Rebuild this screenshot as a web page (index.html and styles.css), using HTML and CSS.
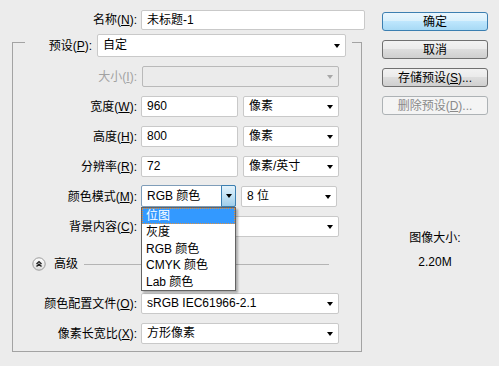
FILE: index.html
```html
<!DOCTYPE html>
<html lang="zh-CN">

<head>
    <meta charset="UTF-8">
    <meta name="viewport" content="width=device-width, initial-scale=1.0">
    <title>新建</title>
    <link rel="stylesheet" href="styles.css">
</head>

<body>
    <div class="dialog">
        <div class="main">
            <div class="row name-row">
                <label class="lbl">名称(<u>N</u>):</label>
                <div class="field name-field">未标题-1</div>
            </div>

            <fieldset class="group">
                <legend class="preset">
                    <label class="lbl preset-lbl">预设(<u>P</u>):</label>
                    <div class="field select preset-select">自定<span class="arrow"></span></div>
                </legend>

                <div class="rows">
                    <div class="row">
                        <label class="lbl disabled">大小(<u>I</u>):</label>
                        <div class="field select wide off"><span class="arrow"></span></div>
                    </div>
                    <div class="row">
                        <label class="lbl">宽度(<u>W</u>):</label>
                        <div class="field short">960</div>
                        <div class="field select unit">像素<span class="arrow"></span></div>
                    </div>
                    <div class="row">
                        <label class="lbl">高度(<u>H</u>):</label>
                        <div class="field short">800</div>
                        <div class="field select unit">像素<span class="arrow"></span></div>
                    </div>
                    <div class="row">
                        <label class="lbl">分辨率(<u>R</u>):</label>
                        <div class="field short">72</div>
                        <div class="field select unit">像素/英寸<span class="arrow"></span></div>
                    </div>
                    <div class="row">
                        <label class="lbl">颜色模式(<u>M</u>):</label>
                        <div class="combo">
                            <div class="field select short open">RGB 颜色<span class="drop-btn"><span class="arrow"></span></span></div>
                            <ul class="menu">
                                <li class="active">位图</li>
                                <li>灰度</li>
                                <li>RGB 颜色</li>
                                <li>CMYK 颜色</li>
                                <li>Lab 颜色</li>
                            </ul>
                        </div>
                        <div class="field select unit">8 位<span class="arrow"></span></div>
                    </div>
                    <div class="row">
                        <label class="lbl">背景内容(<u>C</u>):</label>
                        <div class="field select wide"><span class="arrow"></span></div>
                    </div>
                </div>

                <div class="advanced">
                    <svg class="toggle" width="14" height="14" viewBox="0 0 14 14">
                        <defs>
                            <linearGradient id="tg" x1="0" y1="0" x2="0" y2="1">
                                <stop offset="0" stop-color="#ffffff" />
                                <stop offset="1" stop-color="#dcdcdc" />
                            </linearGradient>
                        </defs>
                        <circle cx="7" cy="7" r="6.2" fill="url(#tg)" stroke="#9a9a9a" />
                        <path d="M4.5 7 L7 4.6 L9.5 7 M4.5 9.6 L7 7.2 L9.5 9.6" fill="none" stroke="#222" stroke-width="1.4" />
                    </svg>
                    <span class="adv-text">高级</span>
                    <span class="adv-line"></span>
                </div>

                <div class="rows lower">
                    <div class="row">
                        <label class="lbl">颜色配置文件(<u>O</u>):</label>
                        <div class="field select wide">sRGB IEC61966-2.1<span class="arrow"></span></div>
                    </div>
                    <div class="row">
                        <label class="lbl">像素长宽比(<u>X</u>):</label>
                        <div class="field select wide">方形像素<span class="arrow"></span></div>
                    </div>
                </div>
            </fieldset>
        </div>

        <div class="side">
            <button class="btn default">确定</button>
            <button class="btn">取消</button>
            <button class="btn">存储预设(<u>S</u>)...</button>
            <button class="btn" disabled>删除预设(<u>D</u>)...</button>

            <div class="info">
                <div>图像大小:</div>
                <div>2.20M</div>
            </div>
        </div>
    </div>
</body>

</html>
```

FILE: styles.css
```css
html,
body {
    margin: 0;
    padding: 0;
    background: #ececec;
}

body {
    font-family: "Liberation Sans", "Noto Sans CJK SC", sans-serif;
    font-size: 12px;
    color: #000;
}

.dialog {
    display: flex;
    gap: 17px;
}

.main {
    width: 365px;
    padding-top: 10px;
}

.row {
    display: flex;
    align-items: center;
    gap: 4px;
    height: 21px;
}

.lbl {
    width: 124px;
    text-align: right;
    white-space: nowrap;
    line-height: 16px;
}

.lbl.disabled {
    color: #a2a2a2;
}

.name-row {
    height: 20px;
}

.name-row .lbl {
    width: 137px;
}

.field {
    box-sizing: border-box;
    height: 21px;
    line-height: 19px;
    padding: 0 5px;
    background: #fff;
    border: 1px solid #c9c9c9;
    border-radius: 2px;
    white-space: nowrap;
}

.name-field {
    width: 224px;
    height: 20px;
    line-height: 18px;
}

.select {
    display: flex;
    align-items: center;
}

.arrow {
    width: 0;
    height: 0;
    margin-left: auto;
    border-left: 3.5px solid transparent;
    border-right: 3.5px solid transparent;
    border-top: 4px solid #000;
}

.short {
    width: 97px;
}

.unit {
    width: 96px;
    margin-left: 1px;
}

.wide {
    width: 198px;
}

.off {
    background: #ebebeb;
    border-color: #b9b9b9;
    margin-left: 1px;
    width: 197px;
}

.off .arrow {
    border-top-color: #a8a8a8;
}

/* group box */
.group {
    margin: -3px 0 0 12px;
    padding: 0 0 7px 0;
    width: 350px;
    box-sizing: border-box;
    border: 1px solid #a3a3a3;
}

.preset {
    display: flex;
    align-items: center;
    gap: 5px;
    margin-left: 12px;
    padding: 7px 6px 0 0;
}

.preset-lbl {
    width: 67px;
}

.preset-select {
    width: 249px;
    height: 23px;
    line-height: 21px;
}

.rows {
    display: flex;
    flex-direction: column;
    gap: 9px;
    margin-top: 9px;
}

.lower {
    margin-top: 22px;
}

/* colour mode combo with open list */
.combo {
    position: relative;
}

.open {
    width: 95px;
    height: 22px;
    margin-top: -1px;
    padding-right: 0;
    border-color: #7f9db9;
}

.drop-btn {
    box-sizing: border-box;
    width: 15px;
    height: 22px;
    margin: -1px -1px -1px auto;
    display: flex;
    align-items: center;
    justify-content: center;
    border: 1px solid #3c7fb1;
    border-radius: 0 2px 2px 0;
    background: linear-gradient(#e3f2fb, #c2e2f5 50%, #9fcdea);
}

.drop-btn .arrow {
    margin-left: 0;
}

.menu {
    position: absolute;
    top: 21px;
    left: 0;
    z-index: 2;
    width: 95px;
    box-sizing: border-box;
    margin: 0;
    padding: 0;
    list-style: none;
    background: #fff;
    border: 1px solid #646464;
    box-shadow: 2px 2px 2px rgba(0, 0, 0, 0.28);
}

.menu li {
    height: 16.4px;
    line-height: 16px;
    padding-left: 4px;
    white-space: nowrap;
}

.menu li.active {
    background: #3399ff;
    color: #fff;
    outline: 1px dotted #e09040;
    outline-offset: -1px;
}

/* advanced toggle */
.advanced {
    display: flex;
    align-items: center;
    height: 14px;
    margin: 20px 32px 0 19px;
}

.toggle {
    display: block;
}

.adv-text {
    margin: 0 6px 0 8px;
    line-height: 14px;
}

.adv-line {
    flex: 1;
    height: 1px;
    background: #b4b4b4;
}

/* right column */
.side {
    width: 106px;
    padding-top: 12px;
    display: flex;
    flex-direction: column;
    gap: 9px;
}

.btn {
    height: 19px;
    padding: 0;
    font: inherit;
    line-height: 16px;
    color: #000;
    border: 1px solid #707070;
    border-radius: 3px;
    background: linear-gradient(#f2f2f2 0%, #ebebeb 45%, #dddddd 50%, #cfcfcf 100%);
}

.btn.default {
    border-color: #3c7fb1;
    background: linear-gradient(#eaf6fd 0%, #d9f0fc 45%, #bee6fd 50%, #a7d9f5 100%);
}

.btn:disabled {
    color: #8a8a8a;
    border-color: #adb2b5;
    background: #f4f4f4;
}

.info {
    margin-top: 106px;
    display: flex;
    flex-direction: column;
    align-items: center;
    gap: 8px;
    line-height: 16px;
}
```
